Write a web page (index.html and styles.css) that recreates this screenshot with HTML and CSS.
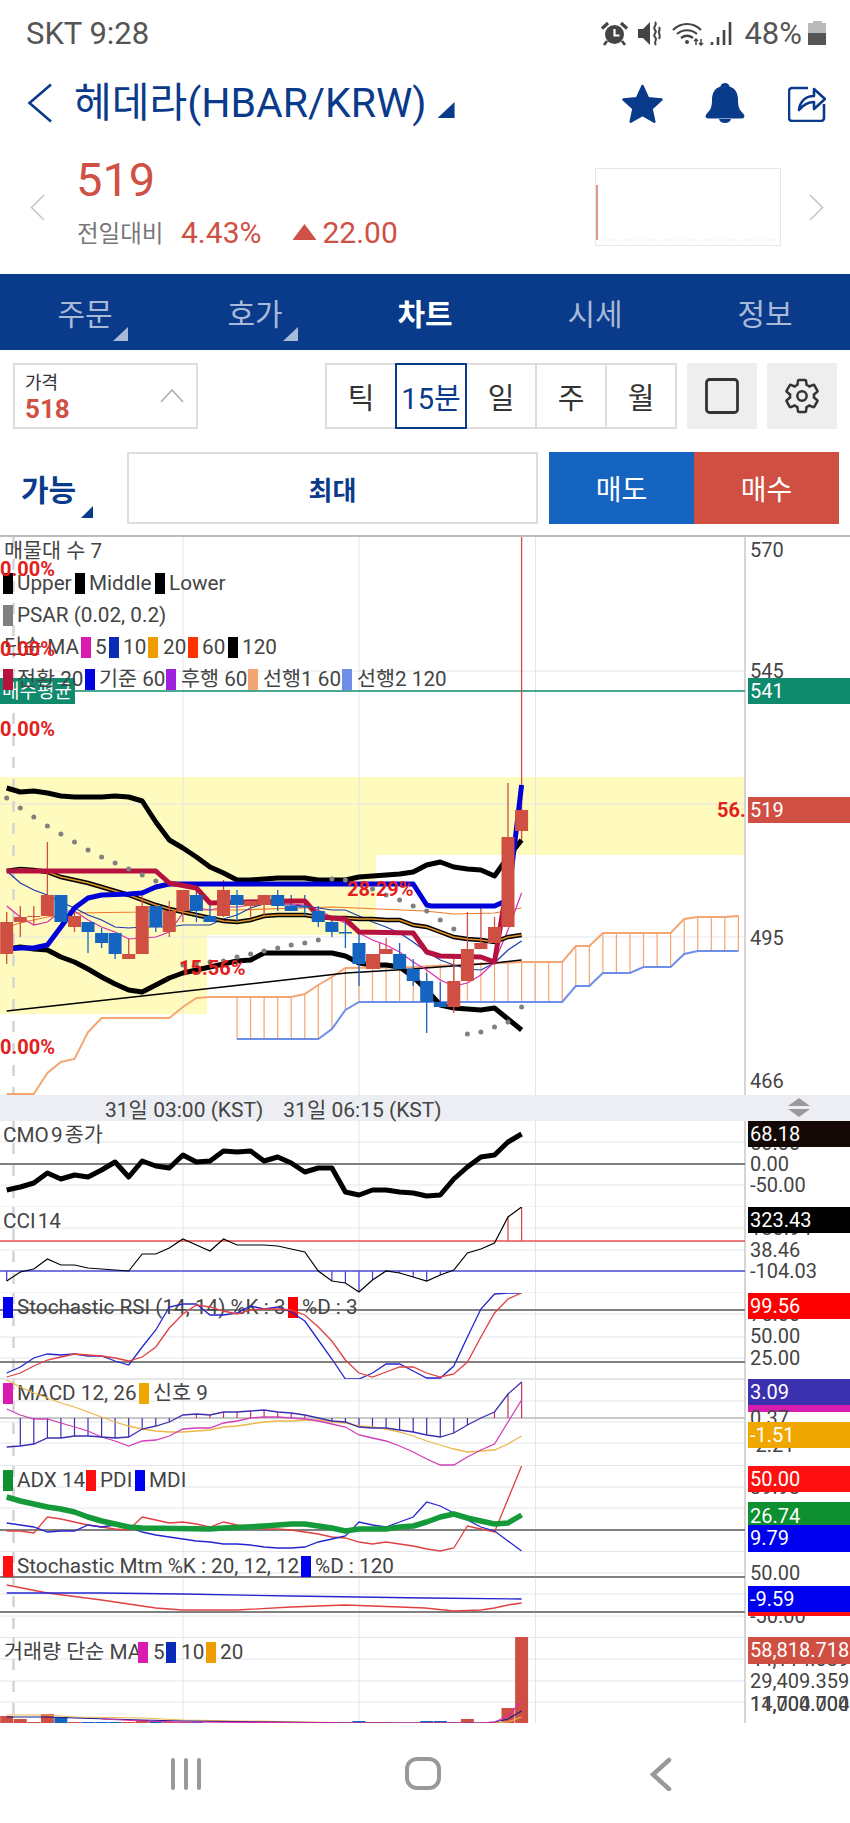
FILE: index.html
```html
<!DOCTYPE html>
<html lang="ko">
<head>
<meta charset="utf-8">
<title>헤데라 차트</title>
<link rel="stylesheet" href="styles.css">
</head>
<body>
<div class="phone">
  <header class="status">
    <span class="carrier">SKT 9:28</span>
    <div class="status-right">
      <svg class="ic-alarm" viewBox="0 0 27 25"><circle cx="13.5" cy="13.5" r="9.5" fill="#444"/><path d="M13.5 8v6.500h5" fill="none" stroke="#fff" stroke-width="2.200"/><path d="M1 7.500l6-5.500M26 7.500l-6-5.500" fill="none" stroke="#444" stroke-width="3.200"/><path d="M6 20l-3 4M21 20l3 4" fill="none" stroke="#444" stroke-width="2.600"/></svg>
      <svg class="ic-mute" viewBox="0 0 23 25"><path d="M0 8h5l7-7v23l-7-7H0z" fill="#444"/><path d="M17 1c3 3-3 5 0 8s-3 4 0 7 -2 5 1 8M21 6c2 3-1 4 0 6s1 4 0 6" fill="none" stroke="#444" stroke-width="2"/></svg>
      <svg class="ic-wifi" viewBox="0 0 32 25"><path d="M1 9c8-8 20-8 28 0M5 13c6-5 14-5 20 0M9 17c4-3 8-3 12 0" fill="none" stroke="#444" stroke-width="2.200"/><circle cx="15" cy="21" r="2" fill="#444"/><path d="M24 24v-6M22 20l2-2 2 2M29 18v6M27 22l2 2 2-2" fill="none" stroke="#444" stroke-width="1.500"/></svg>
      <svg class="ic-signal" viewBox="0 0 23 25"><path d="M2 24v-3M8 24v-8M14 24V9M20 24V1" fill="none" stroke="#444" stroke-width="2.600"/></svg>
      <span class="battery-text">48%</span>
      <div class="battery"><i class="battery-cap"></i><i class="battery-empty"></i><i class="battery-full"></i></div>
    </div>
  </header>

  <div class="titlebar">
    <svg class="ic-back" viewBox="0 0 25 40"><path d="M24 1.500L2.500 20 24 38.500" fill="none" stroke="#0a3a8a" stroke-width="2.600"/></svg>
    <h1 class="title">헤데라(HBAR/KRW)</h1>
    <i class="corner corner-title"></i>
    <div class="title-actions">
      <svg class="ic-star" viewBox="0 0 45 40"><path d="M22.500 3l5.600 12.200 13.400 1.400-10 9 2.800 13.100-11.800-6.700-11.800 6.700 2.800-13.100-10-9 13.400-1.400z" fill="#0a3a8a" stroke="#0a3a8a" stroke-width="2.500" stroke-linejoin="round"/></svg>
      <svg class="ic-bell" viewBox="0 0 40 40"><path d="M20 0c2.500 0 4 1.500 4.500 3.500C31 5.500 33 11 33 17c0 7 1.500 10 5.500 14 2 2.500.5 4.500-2 4.500h-33c-2.500 0-4-2-2-4.500C5.500 27 7 24 7 17c0-6 2-11.500 8.500-13.500C16 1.500 17.500 0 20 0z" fill="#0a3a8a"/><path d="M14 36h12c-.5 2.500-3 4-6 4s-5.500-1.500-6-4z" fill="#0a3a8a"/></svg>
      <svg class="ic-share" viewBox="0 0 38 38"><path d="M20 4H4a3 3 0 0 0-3 3v27a3 3 0 0 0 3 3h29a3 3 0 0 0 3-3V20" fill="none" stroke="#0a3a8a" stroke-width="2.600"/><path d="M11 26c1-9 7-14 15-14V5l11 10-11 10v-7c-6 0-10 2-15 8z" fill="#fff" stroke="#0a3a8a" stroke-width="2.600" stroke-linejoin="round"/></svg>
    </div>
  </div>

  <div class="quote">
    <svg class="ic-small-chev" viewBox="0 0 15 27"><path d="M14 1L1.500 13.500 14 26" fill="none" stroke="#c4c4c4" stroke-width="1.500"/></svg>
    <div class="quote-main">
      <div class="price">519</div>
      <div class="change">
        <span class="change-label">전일대비</span>
        <span class="change-pct">4.43%</span>
        <i class="up-tri"></i>
        <span class="change-val">22.00</span>
      </div>
    </div>
    <div class="mini">
      <svg class="mini-svg" viewBox="0 0 184 76"><path d="M1 71V16" stroke="#d04f43" stroke-width="1.200" fill="none"/><path d="M3 71H184" stroke="#e4e4e4" stroke-dasharray="2 3" fill="none"/></svg>
    </div>
    <svg class="ic-small-chev" viewBox="0 0 15 27"><path d="M1 1l12.500 12.500L1 26" fill="none" stroke="#c4c4c4" stroke-width="1.500"/></svg>
  </div>

  <nav class="tabs">
    <div class="tab">주문<i class="corner corner-tab"></i></div>
    <div class="tab">호가<i class="corner corner-tab"></i></div>
    <div class="tab tab-on">차트</div>
    <div class="tab">시세</div>
    <div class="tab">정보</div>
  </nav>

  <div class="controls">
    <div class="pricebox">
      <div class="pricebox-text">
        <span class="pricebox-label">가격</span>
        <span class="pricebox-value">518</span>
      </div>
      <svg class="ic-up" viewBox="0 0 24 14"><path d="M1 13L12 1l11 12" fill="none" stroke="#aaa" stroke-width="1.500"/></svg>
    </div>
    <div class="segments">
      <div class="seg">틱</div>
      <div class="seg seg-on">15분</div>
      <div class="seg">일</div>
      <div class="seg">주</div>
      <div class="seg">월</div>
    </div>
    <div class="squarebtn"><svg class="ic-square" viewBox="0 0 34 36"><rect x="1.500" y="1.500" width="31" height="33" rx="3" fill="none" stroke="#333" stroke-width="2.800"/></svg></div>
    <div class="squarebtn"><svg class="ic-gear" viewBox="0 0 24 24"><path d="M19.140 12.940c.04-.3.06-.61.06-.94 0-.32-.02-.64-.07-.94l2.030-1.580c.18-.14.23-.41.12-.61l-1.920-3.320c-.12-.22-.37-.29-.59-.22l-2.390.96c-.5-.38-1.030-.7-1.620-.94l-.36-2.540c-.04-.24-.24-.41-.48-.41h-3.840c-.24 0-.43.17-.47.41l-.36 2.540c-.59.24-1.130.57-1.620.94l-2.390-.96c-.22-.08-.47 0-.59.22L2.740 8.870c-.12.21-.08.47.12.61l2.030 1.580c-.05.3-.09.63-.09.94s.02.64.07.94l-2.030 1.580c-.18.14-.23.41-.12.61l1.920 3.320c.12.22.37.29.59.22l2.390-.96c.5.38 1.030.7 1.620.94l.36 2.540c.05.24.24.41.48.41h3.840c.24 0 .44-.17.47-.41l.36-2.540c.59-.24 1.130-.56 1.620-.94l2.390.96c.22.08.47 0 .59-.22l1.920-3.320c.12-.22.07-.47-.12-.61l-2.010-1.580z" fill="none" stroke="#333" stroke-width="1.500"/><circle cx="12" cy="12" r="2.800" fill="none" stroke="#333" stroke-width="1.500"/></svg></div>
  </div>

  <div class="orders">
    <div class="avail">가능<i class="corner corner-avail"></i></div>
    <div class="maxbox">최대</div>
    <div class="sellbtn">매도</div>
    <div class="buybtn">매수</div>
  </div>

  <div class="band"></div>

  <main class="chart">
    <svg class="pane-main" viewBox="0 537 850 558">
      <path class="yellow" d="M0 777H745V855H376V935H207V1014H0z"/>
      <path class="grid" d="M183 537V1095M359 537V1095M535.500 537V1095M0 671H745M0 804H745M0 937H745"/>
      <path class="dash" d="M13.500 537V1095"/>
      <path class="axisline" d="M745 537V1095"/>
      <path class="greenline" d="M0 691H745"/>
      <path class="hatch" d="M237 997V1039M250.600 997V1039M264.100 997V1039M277.700 997V1039M291.200 997V1039M304.800 994V1039M318.300 985V1039M331.900 977V1029M345.400 968V1010M359 967V1002M372.500 967V1002M386.100 967V1002M399.600 967V1002M413.200 967V1002M426.700 965V1002M440.300 964V1002M453.800 963V1002M467.400 963V1002M480.900 962V1002M494.500 962V1002M508 962V1002M521.600 962V1002M535.100 962V1002M548.700 962V1002M562.200 962V1002M575.800 946V986M589.300 946V986M602.900 933V973M616.400 933V973M630 933V973M643.500 933V967M657.100 933V967M670.600 933V967M684.200 919V954M697.700 917V951M711.300 917V951M724.800 917V951M738.400 916V951"/>
      <polyline class="span1" points="6.700,1094 33.800,1094 47.400,1073 60.900,1062 74.500,1059 88,1032 101.600,1018 169.300,1018 182.900,1007 196.400,998 210,997 291.200,997 304.800,994 318.300,985 331.900,977 345.400,968 413.200,967 521.600,962 562.200,962 575.800,946 589.300,946 602.900,933 670.600,933 684.200,919 697.700,917 724.800,917 738.400,916"/>
      <polyline class="span2" points="237,1039 318.300,1039 331.900,1029 345.400,1010 359,1002 562.200,1002 575.800,986 589.300,986 602.900,973 630,973 643.500,967 670.600,967 684.200,954 697.700,951 738.400,951"/>
      <polyline class="ma120" points="6.700,1011 142.200,996 346,973 413,969 425,968 494.500,963 521.600,960"/>
      <polyline class="ma60" points="6.700,927 20.300,923 33.800,920 47.400,917 60.900,915 74.500,913 142.200,912 169.300,910 237,910 333,907 425,911 453.800,914 494.500,913 521.600,908"/>
      <polyline class="ma10" points="6.700,871 20.300,883 33.800,890 47.400,895 60.900,902 74.500,908 88,915 101.600,920 115.100,927 128.700,928 142.200,927 169.300,927 182.900,925 210,925 223.500,919 237,915 250.600,908 264.100,904 277.700,905 291.200,905 304.800,906 318.300,908 331.900,910 345.400,910 359,916 372.500,922 386.100,927 399.600,933 413.200,942 426.700,952 440.300,960 453.800,965 467.400,969 480.900,970 494.500,963 508,950 521.600,941"/>
      <polyline class="ma5" points="6.700,906 20.300,917 33.800,925 47.400,922 60.900,911 74.500,911 88,920 101.600,927 115.100,932 128.700,939 142.200,938 155.800,937 169.300,932 182.900,913 196.400,908 210,910 223.500,907 237,907 250.600,905 264.100,904 277.700,904 291.200,904 304.800,905 318.300,910 331.900,917 345.400,923 359,933 372.500,940 386.100,945 399.600,952 413.200,962 426.700,970 440.300,980 453.800,986 467.400,983 480.900,975 494.500,962 508,930 521.600,893"/>
      <polyline class="bb" points="6.700,788 20.300,792 33.800,791 47.400,793 60.900,796 74.500,797 88,797 101.600,797 115.100,796 128.700,797 142.200,801 155.800,822 169.300,840 182.900,848 196.400,857 210,867 223.500,873 237,880 250.600,880 264.100,879 277.700,878 291.200,878 304.800,878 318.300,880 331.900,880 345.400,880 359,877 372.500,876 386.100,875 399.600,874 413.200,872 426.700,865 440.300,862 453.800,867 467.400,869 480.900,870 494.500,876 508,857 521.600,840"/>
      <polyline class="bb" points="6.700,949 20.300,947 33.800,949 47.400,950 60.900,957 74.500,962 88,969 101.600,977 115.100,984 128.700,990 142.200,992 155.800,985 169.300,978 182.900,973 196.400,970 210,967 223.500,964 237,961 250.600,960 264.100,953 277.700,953 304.800,953 318.300,953 331.900,953 345.400,956 359,963 372.500,965 386.100,965 399.600,967 413.200,977 426.700,990 440.300,1005 453.800,1008 467.400,1009 480.900,1010 494.500,1008 508,1019 521.600,1030"/>
      <polyline class="bbmid-o" points="6.700,871 20.300,869 33.800,870 47.400,872 60.900,877 74.500,880 88,883 101.600,887 115.100,891 128.700,895 142.200,900 155.800,905 169.300,909 182.900,912 196.400,915 210,918 223.500,921 237,922 250.600,920 264.100,916 277.700,915 304.800,915 318.300,917 331.900,918 345.400,918 359,919 372.500,919 386.100,920 399.600,920 413.200,925 426.700,927 440.300,932 453.800,937 467.400,939 480.900,940 494.500,942 508,937 521.600,935"/>
      <polyline class="bbmid-i" points="6.700,871 20.300,869 33.800,870 47.400,872 60.900,877 74.500,880 88,883 101.600,887 115.100,891 128.700,895 142.200,900 155.800,905 169.300,909 182.900,912 196.400,915 210,918 223.500,921 237,922 250.600,920 264.100,916 277.700,915 304.800,915 318.300,917 331.900,918 345.400,918 359,919 372.500,919 386.100,920 399.600,920 413.200,925 426.700,927 440.300,932 453.800,937 467.400,939 480.900,940 494.500,942 508,937 521.600,935"/>
      <path class="wick-r" d="M6.700 912V964M20.300 906V937M33.800 906V925M47.400 842V916M74.500 910V932M128.700 938V959M142.200 890V954M169.300 901V937M182.900 890V922M223.500 880V917M250.600 901V917M264.100 895V916M379.600 943V969M386.100 938V954M453.800 957V1013M467.400 912V981M480.900 906V949M494.500 917V943M508 783V927M521.600 537V840"/>
      <path class="wick-b" d="M60.900 895V922M88 922V953M101.600 928V948M115.100 933V959M155.800 906V932M196.400 887V922M210 903V922M237 890V922M277.700 890V911M291.200 895V911M304.800 895V916M318.300 906V927M331.900 917V937M345.400 922V948M359 933V986M399.600 943V969M413.200 959V986M426.700 973V1033M440.300 982V1002"/>
      <polyline class="kijun" points="6.700,949 20.300,948 33.800,948 47.400,945 60.900,927 74.500,908 88,898 101.600,895 128.700,894 142.200,893 155.800,887 169.300,884 413.200,884 426.700,905 431,906 494.500,906 508,900 521.600,785"/>
      <polyline class="tenkan" points="6.700,871 155.800,871 169.300,883 196.400,888 210,903 291.200,901 304.800,901 318.300,916 331.900,918 345.400,919 359,932 413.200,933 426.700,952 440.300,956 480.900,957 494.500,962 508,880"/>
      <path class="body-r" d="M0.200 922h13v32h-13zM13.800 917h13v5h-13zM27.300 916h13v1h-13zM40.900 895h13v21h-13zM68 916h13v11h-13zM122.200 954h13v5h-13zM135.700 906h13v48h-13zM162.800 911h13v21h-13zM176.400 890h13v21h-13zM217 890h13v26h-13zM244.100 901h13v5h-13zM257.600 895h13v10h-13zM366 954h13v15h-13zM379.600 949h13v5h-13zM447.300 981h13v26h-13zM460.900 949h13v32h-13zM474.400 943h13v6h-13zM488 927h13v16h-13zM501.500 837h13v90h-13zM515.100 810h13v21h-13z"/>
      <path class="body-b" d="M54.400 895h13v27h-13zM81.500 922h13v10h-13zM95.100 933h13v10h-13zM108.600 933h13v21h-13zM149.300 906h13v21h-13zM189.900 895h13v16h-13zM203.500 916h13v6h-13zM230.500 895h13v10h-13zM271.200 895h13v11h-13zM284.700 906h13v5h-13zM298.300 906h13v1.500h-13zM311.800 911h13v11h-13zM325.400 922h13v10h-13zM338.900 932h13v1.500h-13zM352.500 943h13v21h-13zM393.100 954h13v15h-13zM406.700 969h13v12h-13zM420.200 981h13v21h-13zM433.800 1002h13v5h-13z"/>
      <g class="dots">
        <circle cx="6.700" cy="798" r="2.500"/><circle cx="20.300" cy="808" r="2.500"/><circle cx="33.800" cy="817" r="2.500"/><circle cx="47.400" cy="826" r="2.500"/><circle cx="60.900" cy="834" r="2.500"/><circle cx="74.500" cy="842" r="2.500"/><circle cx="88" cy="850" r="2.500"/><circle cx="101.600" cy="857" r="2.500"/><circle cx="115.100" cy="863" r="2.500"/><circle cx="128.700" cy="869" r="2.500"/><circle cx="142.200" cy="875" r="2.500"/><circle cx="155.800" cy="881" r="2.500"/>
        <circle cx="182.900" cy="965" r="2.500"/><circle cx="196.400" cy="963" r="2.500"/><circle cx="210" cy="962" r="2.500"/><circle cx="223.500" cy="961" r="2.500"/><circle cx="237" cy="957" r="2.500"/><circle cx="250.600" cy="954" r="2.500"/><circle cx="264.100" cy="951" r="2.500"/><circle cx="277.700" cy="948" r="2.500"/><circle cx="291.200" cy="945" r="2.500"/><circle cx="304.800" cy="943" r="2.500"/><circle cx="318.300" cy="940" r="2.500"/>
        <circle cx="331.900" cy="879" r="2.500"/><circle cx="345.400" cy="880" r="2.500"/><circle cx="372.500" cy="889" r="2.500"/><circle cx="386.100" cy="895" r="2.500"/><circle cx="399.600" cy="900" r="2.500"/><circle cx="413.200" cy="906" r="2.500"/><circle cx="426.700" cy="911" r="2.500"/><circle cx="440.300" cy="920" r="2.500"/><circle cx="453.800" cy="929" r="2.500"/>
        <circle cx="467.400" cy="1034" r="2.500"/><circle cx="480.900" cy="1032" r="2.500"/><circle cx="494.500" cy="1027" r="2.500"/><circle cx="508" cy="1022" r="2.500"/><circle cx="521.600" cy="1007" r="2.500"/>
      </g>
      <rect class="c-green" x="0" y="678" width="75" height="26"/>
      <rect class="c-red" x="748" y="797" width="102" height="26"/>
      <text class="ax" x="750" y="557">570</text>
      <text class="ax" x="750" y="678">545</text>
      <rect class="c-green" x="748" y="678" width="102" height="26"/>
      <text class="tagt" x="750" y="698">541</text>
      <text class="tagt" x="750" y="817">519</text>
      <text class="ax" x="750" y="945">495</text>
      <text class="ax" x="750" y="1088">466</text>
      <text class="tagt tagk" x="2" y="698">매수평균</text>
      <text class="leg" x="4" y="558">매물대 수 7</text>
      <rect class="sw c-black" x="3" y="573" width="10" height="21"/><text class="leg" x="17" y="590">Upper</text>
      <rect class="sw c-black" x="75" y="573" width="10" height="21"/><text class="leg" x="89" y="590">Middle</text>
      <rect class="sw c-black" x="155" y="573" width="10" height="21"/><text class="leg" x="169" y="590">Lower</text>
      <rect class="sw c-gray" x="3" y="605" width="10" height="21"/><text class="leg" x="17" y="622">PSAR (0.02, 0.2)</text>
      <text class="leg" x="4" y="654">단순 MA</text>
      <rect class="sw c-magenta" x="81" y="637" width="10" height="21"/><text class="leg" x="95" y="654">5</text>
      <rect class="sw c-navy" x="109" y="637" width="10" height="21"/><text class="leg" x="123" y="654">10</text>
      <rect class="sw c-orange" x="148" y="637" width="10" height="21"/><text class="leg" x="163" y="654">20</text>
      <rect class="sw c-scarlet" x="188" y="637" width="10" height="21"/><text class="leg" x="202" y="654">60</text>
      <rect class="sw c-black" x="228" y="637" width="10" height="21"/><text class="leg" x="242" y="654">120</text>
      <rect class="sw c-crimson" x="3" y="669" width="10" height="21"/><text class="leg" x="17" y="686">전환 20</text>
      <rect class="sw c-blue" x="85" y="669" width="10" height="21"/><text class="leg" x="99" y="686">기준 60</text>
      <rect class="sw c-purple" x="166" y="669" width="10" height="21"/><text class="leg" x="181" y="686">후행 60</text>
      <rect class="sw c-peach" x="248" y="669" width="10" height="21"/><text class="leg" x="263" y="686">선행1 60</text>
      <rect class="sw c-periwinkle" x="342" y="669" width="10" height="21"/><text class="leg" x="357" y="686">선행2 120</text>
      <text class="pct" x="0" y="576">0.00%</text>
      <text class="pct" x="0" y="656">0.00%</text>
      <text class="pct" x="0" y="736">0.00%</text>
      <text class="pct" x="0" y="1054">0.00%</text>
      <text class="pct" x="179" y="975">15.56%</text>
      <text class="pct" x="347" y="896">28.29%</text>
      <text class="pct" x="717" y="817">56.</text>
    </svg>

    <div class="xaxis">
      <span class="xlabel xlabel-a">31일 03:00 (KST)</span>
      <span class="xlabel">31일 06:15 (KST)</span>
      <svg class="ic-resize" viewBox="0 0 22 19"><path d="M11 0l11 8H0zM0 11h22L11 19z" fill="#9a9a9a"/></svg>
    </div>

    <svg class="pane h86" viewBox="0 1121 850 86">
      <path class="grid" d="M183 1121V1207M359 1121V1207M535.500 1121V1207M0 1142H745M0 1185H745M0 1207H745"/>
      <path class="dash" d="M13.500 1121V1207"/>
      <path class="axisline" d="M745 1121V1207"/>
      <path class="level" d="M0 1164H745"/>
      <text class="leg leg-tight" x="3" y="1142">CMO 9 종가</text>
      <polyline class="thick-k" points="6.700,1190 20.300,1187 33.800,1183 47.400,1173 60.900,1179 74.500,1175 88,1177 101.600,1170 115.100,1162 128.700,1177 142.200,1161 155.800,1166 169.300,1168 182.900,1155 196.400,1162 210,1161 223.500,1151 237,1152 250.600,1151 264.100,1161 277.700,1157 291.200,1163 304.800,1172 318.300,1168 331.900,1168 345.400,1192 359,1195 372.500,1190 386.100,1190 399.600,1192 413.200,1193 426.700,1196 440.300,1195 453.800,1179 467.400,1167 480.900,1157 494.500,1155 508,1142 521.600,1134"/>
      <text class="ax" x="750" y="1150">50.00</text>
      <rect class="c-dark" x="748" y="1121" width="102" height="26"/>
      <text class="tagt" x="750" y="1141">68.18</text>
      <text class="ax" x="750" y="1171">0.00</text>
      <text class="ax" x="750" y="1192">-50.00</text>
    </svg>

    <svg class="pane h86" viewBox="0 1207 850 86">
      <path class="grid" d="M183 1207V1293M359 1207V1293M535.500 1207V1293M0 1228H745M0 1250H745M0 1293H745"/>
      <path class="dash" d="M13.500 1207V1293"/>
      <path class="axisline" d="M745 1207V1293"/>
      <path class="bar-b" d="M6.700 1271V1281M331.900 1271V1281M345.400 1271V1283M359 1271V1292M372.500 1271V1280M399.600 1271V1273M413.200 1271V1277M426.700 1271V1281M440.300 1271V1275"/>
      <path class="bar-r" d="M508 1241V1217M521.600 1241V1207"/>
      <path class="lvl-r" d="M0 1241H745"/>
      <path class="lvl-b" d="M0 1271H745"/>
      <text class="leg leg-tight" x="3" y="1228">CCI 14</text>
      <polyline class="thin-k" points="6.700,1281 20.300,1272 33.800,1269 47.400,1259 60.900,1265 74.500,1265 88,1268 101.600,1269 115.100,1270 128.700,1271 142.200,1254 155.800,1254 169.300,1248 182.900,1239 196.400,1245 210,1251 223.500,1239 237,1245 250.600,1245 264.100,1245 277.700,1246 291.200,1249 304.800,1252 318.300,1271 331.900,1281 345.400,1283 359,1292 372.500,1280 386.100,1271 399.600,1273 413.200,1277 426.700,1281 440.300,1275 453.800,1270 467.400,1253 480.900,1249 494.500,1243 508,1217 521.600,1207"/>
      <text class="ax" x="750" y="1235">180.94</text>
      <rect class="c-black" x="748" y="1207" width="102" height="26"/>
      <text class="tagt" x="750" y="1227">323.43</text>
      <text class="ax" x="750" y="1257">38.46</text>
      <text class="ax" x="750" y="1278">-104.03</text>
    </svg>

    <svg class="pane h86" viewBox="0 1293 850 86">
      <path class="grid" d="M183 1293V1379M359 1293V1379M535.500 1293V1379M0 1314H745M0 1337H745M0 1358H745M0 1378.500H745"/>
      <path class="dash" d="M13.500 1293V1379"/>
      <path class="axisline" d="M745 1293V1379"/>
      <path class="level" d="M0 1310H745M0 1362H745"/>
      <rect class="sw c-pure-b" x="3" y="1297" width="10" height="21"/>
      <text class="leg" x="17" y="1314">Stochastic RSI (14, 14) %K : 3</text>
      <rect class="sw c-pure-r" x="288" y="1297" width="10" height="21"/>
      <text class="leg" x="302" y="1314">%D : 3</text>
      <polyline class="thin-b" points="6.700,1373 20.300,1367 33.800,1358 47.400,1354 60.900,1355 74.500,1354 88,1356 101.600,1356 115.100,1361 128.700,1365 142.200,1347 155.800,1330 169.300,1307 182.900,1304 196.400,1304 210,1315 223.500,1315 237,1313 250.600,1306 264.100,1309 277.700,1307 291.200,1312 304.800,1321 318.300,1340 331.900,1359 345.400,1379 359,1379 372.500,1373 386.100,1364 399.600,1364 413.200,1371 426.700,1378 440.300,1378 453.800,1366 467.400,1337 480.900,1309 494.500,1294 508,1293 521.600,1293"/>
      <polyline class="thin-r" points="6.700,1377 20.300,1373 33.800,1366 47.400,1360 60.900,1357 74.500,1354 88,1355 101.600,1356 115.100,1358 128.700,1361 142.200,1357 155.800,1347 169.300,1328 182.900,1314 196.400,1305 210,1307 223.500,1311 237,1314 250.600,1310 264.100,1309 277.700,1309 291.200,1310 304.800,1315 318.300,1327 331.900,1341 345.400,1360 359,1373 372.500,1377 386.100,1372 399.600,1367 413.200,1367 426.700,1373 440.300,1377 453.800,1374 467.400,1362 480.900,1337 494.500,1313 508,1299 521.600,1293"/>
      <text class="ax" x="750" y="1321">75.00</text>
      <rect class="c-pure-r" x="748" y="1293" width="102" height="26"/>
      <text class="tagt" x="750" y="1313">99.56</text>
      <text class="ax" x="750" y="1343">50.00</text>
      <text class="ax" x="750" y="1365">25.00</text>
    </svg>

    <svg class="pane h87" viewBox="0 1379 850 87">
      <path class="grid" d="M183 1379V1466M359 1379V1466M535.500 1379V1466M0 1379.500H745M0 1401H745M0 1422H745M0 1443H745M0 1465.500H745"/>
      <path class="dash" d="M13.500 1379V1466"/>
      <path class="axisline" d="M745 1379V1466"/>
      <path class="level-light" d="M0 1418H745"/>
      <path class="bar-macd-b" d="M20.300 1418V1446M33.800 1418V1444M47.400 1418V1438M60.900 1418V1438M74.500 1418V1436M88 1418V1436M101.600 1418V1437M115.100 1418V1438M128.700 1418V1437M142.200 1418V1429M155.800 1418V1426M169.300 1418V1422M331.900 1418V1421M345.400 1418V1422M359 1418V1427M372.500 1418V1428M386.100 1418V1428M399.600 1418V1430M413.200 1418V1432M426.700 1418V1435M440.300 1418V1437M453.800 1418V1433M467.400 1418V1425"/>
      <path class="bar-macd-r" d="M196.400 1418V1414M210 1418V1415M223.500 1418V1412M237 1418V1412M250.600 1418V1411M264.100 1418V1410M277.700 1418V1412M291.200 1418V1413M304.800 1418V1415M494.500 1418V1412M508 1418V1394M521.600 1418V1382"/>
      <rect class="sw c-magenta" x="3" y="1383" width="10" height="21"/>
      <text class="leg" x="17" y="1400">MACD 12, 26</text>
      <rect class="sw c-amber" x="139" y="1383" width="10" height="21"/>
      <text class="leg" x="153" y="1400">신호 9</text>
      <polyline class="thin-signal" points="6.700,1380 20.300,1387 33.800,1393 47.400,1398 60.900,1403 74.500,1407 88,1412 101.600,1417 115.100,1422 128.700,1426 142.200,1429 155.800,1431 169.300,1432 182.900,1432 196.400,1431 210,1430 223.500,1427 237,1426 250.600,1424 264.100,1422 277.700,1421 291.200,1421 304.800,1420 318.300,1420 331.900,1422 345.400,1423 359,1426 372.500,1427 386.100,1429 399.600,1432 413.200,1436 426.700,1441 440.300,1445 453.800,1449 467.400,1452 480.900,1451 494.500,1450 508,1444 521.600,1436"/>
      <polyline class="thin-m" points="6.700,1409 20.300,1415 33.800,1419 47.400,1419 60.900,1423 74.500,1427 88,1431 101.600,1437 115.100,1441 128.700,1446 142.200,1441 155.800,1440 169.300,1436 182.900,1429 196.400,1428 210,1428 223.500,1423 237,1421 250.600,1418 264.100,1417 277.700,1417 291.200,1418 304.800,1419 318.300,1421 331.900,1424 345.400,1427 359,1435 372.500,1438 386.100,1441 399.600,1446 413.200,1452 426.700,1459 440.300,1465 453.800,1465 467.400,1457 480.900,1450 494.500,1444 508,1422 521.600,1400"/>
      <polyline class="thin-bp" points="6.700,1447 20.300,1446 33.800,1444 47.400,1438 60.900,1438 74.500,1436 88,1436 101.600,1437 115.100,1438 128.700,1437 142.200,1429 155.800,1426 169.300,1422 182.900,1415 196.400,1414 210,1415 223.500,1412 237,1412 250.600,1411 264.100,1410 277.700,1412 291.200,1413 304.800,1415 318.300,1418 331.900,1421 345.400,1422 359,1427 372.500,1428 386.100,1428 399.600,1430 413.200,1432 426.700,1435 440.300,1437 453.800,1433 467.400,1425 480.900,1418 494.500,1412 508,1394 521.600,1382"/>
      <rect class="c-indigo" x="748" y="1379" width="102" height="26"/>
      <rect class="c-magenta" x="748" y="1405" width="102" height="7"/>
      <text class="tagt" x="750" y="1399">3.09</text>
      <text class="ax" x="750" y="1425">0.37</text>
      <text class="ax" x="750" y="1452">-2.21</text>
      <rect class="c-amber" x="748" y="1422" width="102" height="26"/>
      <text class="tagt" x="750" y="1442">-1.51</text>
    </svg>

    <svg class="pane h86" viewBox="0 1466 850 86">
      <path class="grid" d="M183 1466V1552M359 1466V1552M535.500 1466V1552M0 1487H745M0 1508H745M0 1551.500H745"/>
      <path class="dash" d="M13.500 1466V1552"/>
      <path class="axisline" d="M745 1466V1552"/>
      <path class="level" d="M0 1530H745"/>
      <rect class="sw c-green2" x="3" y="1470" width="10" height="21"/>
      <text class="leg" x="17" y="1487">ADX 14</text>
      <rect class="sw c-red2" x="86" y="1470" width="10" height="21"/>
      <text class="leg" x="100" y="1487">PDI</text>
      <rect class="sw c-pure-b" x="135" y="1470" width="10" height="21"/>
      <text class="leg" x="149" y="1487">MDI</text>
      <polyline class="thin-r" points="6.700,1531 20.300,1531 33.800,1533 47.400,1517 60.900,1519 74.500,1522 88,1525 101.600,1527 115.100,1529 128.700,1530 142.200,1517 155.800,1520 169.300,1523 182.900,1522 196.400,1524 210,1527 223.500,1522 237,1525 250.600,1527 264.100,1529 277.700,1529 291.200,1530 304.800,1532 318.300,1534 331.900,1537 345.400,1538 359,1542 372.500,1544 386.100,1542 399.600,1544 413.200,1546 426.700,1549 440.300,1551 453.800,1548 467.400,1526 480.900,1529 494.500,1532 508,1499 521.600,1466"/>
      <polyline class="thin-b" points="6.700,1523 20.300,1525 33.800,1527 47.400,1532 60.900,1531 74.500,1531 88,1525 101.600,1527 115.100,1525 128.700,1527 142.200,1532 155.800,1535 169.300,1537 182.900,1539 196.400,1541 210,1542 223.500,1544 237,1544 250.600,1545 264.100,1547 277.700,1548 291.200,1548 304.800,1547 318.300,1542 331.900,1539 345.400,1536 359,1522 372.500,1525 386.100,1527 399.600,1522 413.200,1517 426.700,1502 440.300,1506 453.800,1513 467.400,1520 480.900,1527 494.500,1531 508,1541 521.600,1551"/>
      <polyline class="thick-g" points="6.700,1497 20.300,1501 33.800,1504 47.400,1507 60.900,1509 74.500,1512 88,1517 101.600,1521 115.100,1524 128.700,1527 142.200,1528 210,1529 223.500,1528 237,1527.500 264.100,1526 291.200,1524 304.800,1524 318.300,1526 331.900,1528 345.400,1531 359,1529 386.100,1529 399.600,1527 413.200,1526 426.700,1522 440.300,1517 453.800,1514 467.400,1518 480.900,1521 494.500,1524 508,1523 521.600,1515"/>
      <text class="ax" x="750" y="1494">39.93</text>
      <rect class="c-red2" x="748" y="1466" width="102" height="26"/>
      <text class="tagt" x="750" y="1486">50.00</text>
      <rect class="c-green2" x="748" y="1502" width="102" height="23"/>
      <text class="tagt" x="750" y="1523">26.74</text>
      <rect class="c-pure-b" x="748" y="1525" width="102" height="27"/>
      <text class="tagt" x="750" y="1545">9.79</text>
    </svg>

    <svg class="pane h85" viewBox="0 1552 850 85">
      <path class="grid" d="M183 1552V1637M359 1552V1637M535.500 1552V1637M0 1573H745M0 1594H745M0 1616H745"/>
      <path class="dash" d="M13.500 1552V1637"/>
      <path class="axisline" d="M745 1552V1637"/>
      <path class="level" d="M0 1577H745M0 1612H745"/>
      <rect class="sw c-red2" x="3" y="1556" width="10" height="21"/>
      <text class="leg" x="17" y="1573">Stochastic Mtm %K : 20, 12, 12</text>
      <rect class="sw c-pure-b" x="301" y="1556" width="10" height="21"/>
      <text class="leg" x="315" y="1573">%D : 120</text>
      <polyline class="thin-r" points="6.700,1585 47.400,1593 101.600,1600 155.800,1608 182.900,1610 237,1610 291.200,1607 345.400,1605 399.600,1607 425,1608 453.800,1611 480.900,1610 494.500,1608 508,1605 521.600,1603"/>
      <polyline class="thin-b" points="6.700,1593 101.600,1593 182.900,1594 291.200,1596 425,1598 521.600,1599"/>
      <text class="ax" x="750" y="1580">50.00</text>
      <text class="ax" x="750" y="1623">-50.00</text>
      <rect class="c-red2" x="748" y="1612" width="102" height="4"/>
      <rect class="c-pure-b" x="748" y="1586" width="102" height="26"/>
      <text class="tagt" x="750" y="1606">-9.59</text>
    </svg>

    <svg class="pane h86" viewBox="0 1637 850 86">
      <path class="grid" d="M183 1637V1723M359 1637V1723M535.500 1637V1723M0 1637.500H745M0 1659H745M0 1681H745M0 1702H745"/>
      <path class="dash" d="M13.500 1637V1723"/>
      <path class="axisline" d="M745 1637V1723"/>
      <text class="leg" x="4" y="1659">거래량 단순 MA</text>
      <rect class="sw c-magenta" x="138" y="1642" width="10" height="21"/><text class="leg" x="153" y="1659">5</text>
      <rect class="sw c-navy" x="166" y="1642" width="10" height="21"/><text class="leg" x="181" y="1659">10</text>
      <rect class="sw c-orange" x="206" y="1642" width="10" height="21"/><text class="leg" x="220" y="1659">20</text>
      <path class="body-r" d="M0.200 1716h13v7h-13zM13.800 1719h13v4h-13zM27.300 1722h13v1h-13zM40.900 1714h13v9h-13zM68 1722h13v1h-13zM122.200 1722h13v1h-13zM135.700 1720h13v3h-13zM162.800 1722h13v1h-13zM176.400 1722h13v1h-13zM366 1722h13v1h-13zM379.600 1722h13v1h-13zM447.300 1722h13v1h-13zM460.900 1719h13v4h-13zM488 1722h13v1h-13zM501.500 1708h13v15h-13zM515.100 1637h13v86h-13z"/>
      <path class="body-b" d="M54.400 1717h13v6h-13zM81.500 1722h13v1h-13zM95.100 1722h13v1h-13zM108.600 1722h13v1h-13zM149.300 1721h13v2h-13zM189.900 1722h13v1h-13zM352.500 1721h13v2h-13zM420.200 1721h13v2h-13zM433.800 1721h13v2h-13z"/>
      <polyline class="vol-o" points="6.700,1715 47.400,1715 74.500,1717 142.200,1718 182.900,1720 359,1723 494.500,1723 508,1722 521.600,1717"/>
      <polyline class="vol-n" points="6.700,1717 47.400,1717 74.500,1718 142.200,1720 182.900,1721 359,1723 480.900,1723 494.500,1722 508,1719 521.600,1711"/>
      <polyline class="vol-m" points="101.600,1719 142.200,1721 182.900,1722 359,1723 480.900,1723 494.500,1722 508,1716 521.600,1701"/>
      <text class="ax" x="750" y="1666">44,114.039</text>
      <rect class="c-red" x="748" y="1637" width="102" height="27"/>
      <text class="tagt" x="750" y="1657">58,818.718</text>
      <text class="ax" x="750" y="1688">29,409.359</text>
      <text class="ax" x="750" y="1711">14,704.704</text>
      <text class="ax" x="750" y="1711">11,000.000</text>
    </svg>
  </main>

  <footer class="navbar">
    <svg class="ic-nav" viewBox="0 0 36 36"><path d="M5 5V33M18 5V33M31 5V33" fill="none" stroke="#999" stroke-width="4" stroke-linecap="round"/></svg>
    <svg class="ic-nav" viewBox="0 0 36 36"><rect x="2" y="4" width="32" height="29" rx="10" fill="none" stroke="#999" stroke-width="4"/></svg>
    <svg class="ic-nav" viewBox="0 0 36 36"><path d="M26 5L10 19.500 26 34" fill="none" stroke="#999" stroke-width="4.500" stroke-linecap="round"/></svg>
  </footer>
</div>
</body>
</html>
```

FILE: styles.css
```css
* { box-sizing: border-box; }
html, body { margin: 0; padding: 0; background: #fff; }
body { font-family: Roboto, "Noto Sans CJK KR", sans-serif; }
.phone { width: 850px; height: 1823px; overflow: hidden; background: #fff; }
svg { display: block; }
i { display: block; font-style: normal; }

/* status bar */
.status { height: 66px; padding: 0 24px 0 26px; display: flex; align-items: center; justify-content: space-between; color: #555; font-size: 31px; }
.status-right { display: flex; align-items: center; }
.ic-alarm { width: 27px; height: 25px; margin-right: 10px; }
.ic-mute { width: 23px; height: 25px; margin-right: 11px; }
.ic-wifi { width: 32px; height: 25px; margin-right: 6px; }
.ic-signal { width: 23px; height: 25px; margin-right: 11px; }
.battery-text { margin-right: 6px; }
.battery { width: 18px; height: 24px; display: flex; flex-direction: column; align-items: center; }
.battery-cap { width: 9px; height: 2px; background: #bbb; }
.battery-empty { width: 18px; height: 10px; background: #bbb; }
.battery-full { width: 18px; height: 12px; background: #555; }

/* title */
.titlebar { height: 74px; padding: 0 24px 0 27px; display: flex; align-items: center; position: relative; }
.ic-back { width: 25px; height: 40px; }
.title { margin: 0 0 0 22px; font-size: 41px; font-weight: 400; color: #0a3a8a; line-height: 46px; white-space: nowrap; }
.corner { clip-path: polygon(100% 0, 100% 100%, 0 100%); }
.corner-title { width: 17px; height: 16px; background: #0a3a8a; margin: 14px 0 0 11px; align-self: center; }
.title-actions { margin-left: auto; display: flex; align-items: center; }
.ic-star { width: 45px; height: 40px; margin-right: 40px; }
.ic-bell { width: 40px; height: 40px; margin-right: 43px; }
.ic-share { width: 38px; height: 38px; }

/* quote */
.quote { height: 134px; padding: 0 26px 0 30px; display: flex; align-items: center; }
.ic-small-chev { width: 15px; height: 27px; flex: none; }
.quote-main { flex: 1; margin-left: 31px; align-self: flex-start; padding-top: 16px; }
.price { font-size: 47px; line-height: 48px; color: #cf5044; }
.change { margin-top: 12px; height: 32px; display: flex; align-items: center; color: #cf5044; font-size: 30px; padding-left: 1px; }
.change-label { font-size: 23.500px; color: #777; margin-right: 21px; width: 83px; white-space: nowrap; }
.change-pct { margin-right: 31px; }
.up-tri { width: 24px; height: 16px; background: #cf5044; clip-path: polygon(50% 0, 100% 100%, 0 100%); margin-right: 6px; }
.mini { width: 186px; height: 78px; border: 1px solid #e6e6e6; margin-right: 28px; }
.mini-svg { width: 184px; height: 76px; }

/* tabs */
.tabs { height: 76px; background: #0a3a8a; display: grid; grid-template-columns: repeat(5, 170px); }
.tab { position: relative; display: flex; align-items: center; justify-content: center; color: #a9b9d8; font-size: 30px; }
.tab-on { color: #fff; font-weight: 700; }
.corner-tab { position: absolute; left: 113px; top: 53px; width: 15px; height: 14px; background: #a9b9d8; }

/* controls */
.controls { height: 66px; margin-top: 13px; padding: 0 12px 0 13px; display: flex; }
.pricebox { width: 185px; border: 2px solid #ddd; padding: 0 12px 0 10px; display: flex; align-items: center; justify-content: space-between; }
.pricebox-text { display: flex; flex-direction: column; }
.pricebox-label { font-size: 18px; line-height: 26px; color: #333; }
.pricebox-value { font-size: 26px; line-height: 26px; font-weight: 700; color: #cf5044; }
.ic-up { width: 24px; height: 14px; }
.segments { margin-left: 127px; width: 352px; display: flex; border: 2px solid #ddd; }
.seg { flex: 1; display: flex; align-items: center; justify-content: center; font-size: 29px; color: #333; border-left: 2px solid #ddd; white-space: nowrap; }
.seg:first-child { border-left: 0; }
.seg-on { border: 2px solid #0a3a8a; margin: -2px 0; color: #0a3a8a; }
.seg-on + .seg { border-left: 0; }
.squarebtn { width: 70px; margin-left: 10px; background: #eee; display: flex; align-items: center; justify-content: center; }
.ic-square { width: 34px; height: 36px; }
.ic-gear { width: 40px; height: 40px; }

/* orders */
.orders { height: 72px; margin-top: 23px; padding-left: 21px; display: flex; }
.avail { width: 106px; position: relative; display: flex; align-items: center; font-size: 30px; font-weight: 700; color: #0a3a8a; }
.corner-avail { position: absolute; left: 60px; top: 54px; width: 12px; height: 12px; background: #0a3a8a; }
.maxbox { width: 411px; border: 2px solid #ddd; display: flex; align-items: center; justify-content: center; font-size: 26px; font-weight: 700; color: #0a3a8a; }
.sellbtn, .buybtn { width: 145px; display: flex; align-items: center; justify-content: center; font-size: 28px; color: #fff; }
.sellbtn { margin-left: 11px; background: #1565c0; }
.buybtn { background: #d04f43; }
.band { height: 2px; margin-top: 11px; background: #bdbdbd; }

/* chart */
.chart { display: flex; flex-direction: column; }
.pane-main { width: 850px; height: 558px; }
.pane { width: 850px; }
.h85 { height: 85px; }
.h86 { height: 86px; }
.h87 { height: 87px; }
.xaxis { height: 26px; background: #eceef3; display: flex; align-items: center; position: relative; font-size: 21px; color: #444; }
.xlabel { margin-right: 20px; white-space: nowrap; }
.xlabel-a { margin-left: 105px; }
.ic-resize { position: absolute; left: 788px; top: 3px; width: 22px; height: 19px; }

.yellow { fill: #fffbbf; }
.grid { fill: none; stroke: #e4e6e8; stroke-width: 1; }
.dash { fill: none; stroke: #d4d4d4; stroke-width: 2.500; stroke-dasharray: 11 11; }
.axisline { fill: none; stroke: #c8c8c8; stroke-width: 1.500; }
.greenline { fill: none; stroke: #0f8a6c; stroke-width: 1.500; }
.hatch { fill: none; stroke: #f4a672; stroke-width: 1.200; }
.span1 { fill: none; stroke: #f4a672; stroke-width: 2; }
.span2 { fill: none; stroke: #6f8ee8; stroke-width: 2; }
.ma120 { fill: none; stroke: #000; stroke-width: 1.500; }
.ma60 { fill: none; stroke: #ee7a2c; stroke-width: 1.200; }
.ma10 { fill: none; stroke: #1c3aa8; stroke-width: 1.200; }
.ma5 { fill: none; stroke: #d82cae; stroke-width: 1.200; }
.bb { fill: none; stroke: #000; stroke-width: 5; stroke-linejoin: round; }
.bbmid-o { fill: none; stroke: #000; stroke-width: 4.500; }
.bbmid-i { fill: none; stroke: #e2942a; stroke-width: 1.500; }
.wick-r { fill: none; stroke: #d04f43; stroke-width: 1.300; }
.wick-b { fill: none; stroke: #1565c0; stroke-width: 1.300; }
.body-r { fill: #d04f43; }
.body-b { fill: #1565c0; }
.tenkan { fill: none; stroke: #b5123f; stroke-width: 5; stroke-linejoin: round; }
.kijun { fill: none; stroke: #0000d8; stroke-width: 5; stroke-linejoin: round; }
.dots { fill: #808080; }

.level { fill: none; stroke: #808080; stroke-width: 2; }
.level-light { fill: none; stroke: #c8c8c8; stroke-width: 2; }
.lvl-r { fill: none; stroke: #e85050; stroke-width: 1.500; }
.lvl-b { fill: none; stroke: #4848d8; stroke-width: 1.500; }
.bar-b { fill: none; stroke: #3a3ad8; stroke-width: 1.200; }
.bar-r { fill: none; stroke: #d84040; stroke-width: 1.200; }
.bar-macd-b { fill: none; stroke: #3b30b0; stroke-width: 1.200; }
.bar-macd-r { fill: none; stroke: #c83060; stroke-width: 1.200; }
.thick-k { fill: none; stroke: #000; stroke-width: 5; stroke-linejoin: round; }
.thin-k { fill: none; stroke: #000; stroke-width: 1.200; }
.thin-b { fill: none; stroke: #2525d0; stroke-width: 1.300; }
.thin-r { fill: none; stroke: #e04040; stroke-width: 1.300; }
.thin-signal { fill: none; stroke: #ecb84a; stroke-width: 1.300; }
.thin-m { fill: none; stroke: #d040b8; stroke-width: 1.300; }
.thin-bp { fill: none; stroke: #3b30b0; stroke-width: 1.300; }
.thick-g { fill: none; stroke: #159a3a; stroke-width: 5.500; stroke-linejoin: round; }
.vol-o { fill: none; stroke: #ecb84a; stroke-width: 1.200; }
.vol-n { fill: none; stroke: #1c1c90; stroke-width: 1.200; }
.vol-m { fill: none; stroke: #d82cae; stroke-width: 1.200; }

.ax, .leg, .tagt, .pct { font-family: Roboto, "Noto Sans CJK KR", sans-serif; font-size: 20px; }
.leg { font-size: 20.700px; }
.leg-tight { word-spacing: -3px; }
.ax, .leg { fill: #444; }
.tagt { fill: #fff; }
.tagk { font-size: 19px; }
.pct { fill: #e2201c; font-weight: 700; }

.c-green { fill: #0f8a6c; }
.c-red { fill: #d04f43; }
.c-black { fill: #000; }
.c-dark { fill: #130805; }
.c-gray { fill: #808080; }
.c-magenta { fill: #d81cb0; }
.c-navy { fill: #0a2bb5; }
.c-orange { fill: #ef9c00; }
.c-amber { fill: #f0a800; }
.c-scarlet { fill: #ff3300; }
.c-crimson { fill: #b5123f; }
.c-blue { fill: #0000e0; }
.c-purple { fill: #a020e0; }
.c-peach { fill: #f4a672; }
.c-periwinkle { fill: #6f8ee8; }
.c-pure-b { fill: #0000f0; }
.c-pure-r { fill: #ff0000; }
.c-red2 { fill: #ff1010; }
.c-green2 { fill: #0e8f30; }
.c-indigo { fill: #3b30b0; }

/* nav */
.navbar { height: 100px; padding-left: 67px; display: grid; grid-template-columns: repeat(3, 237.500px); align-items: center; justify-items: center; }
.ic-nav { width: 36px; height: 36px; }
```
